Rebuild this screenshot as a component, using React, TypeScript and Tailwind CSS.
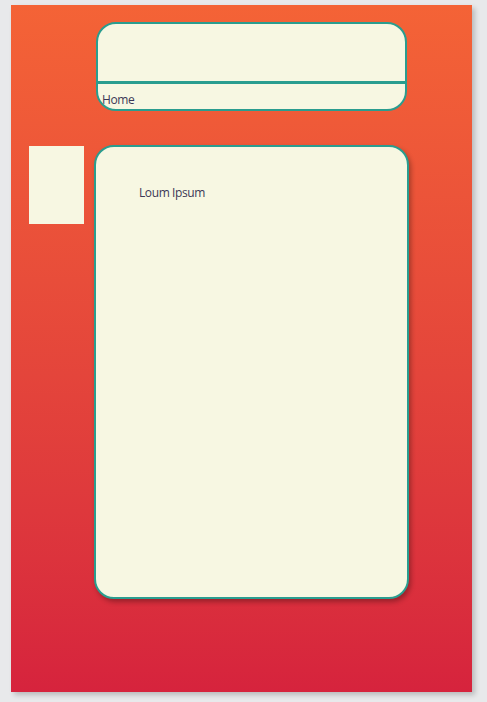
export default function App() {
  return (
    <div className="min-h-[702px] w-full bg-[#e8e9eb] pt-[5px] pl-[11px]" style={{ fontFamily: '"Open Sans", "Noto Sans", sans-serif' }}>
      <div className="w-[461px] h-[687px] bg-gradient-to-b from-[#f46336] to-[#d6233d] shadow-[3px_3px_5px_rgba(0,0,0,0.2)] flex flex-col pt-[17px]">
        {/* Header */}
        <div className="ml-[85px] w-[311px] h-[89px] bg-[#f7f7e2] border-2 border-[#2a9d8f] rounded-[20px] flex flex-col overflow-hidden">
          <div className="h-[60px] border-b-[3px] border-[#2a9d8f]" />
          <div className="pl-[4px] pt-[8px] text-[12px] tracking-[-0.4px] leading-[16px] text-[#3b3756]">Home</div>
        </div>

        {/* Body */}
        <div className="flex mt-[34px]">
          <div className="ml-[18px] mt-px w-[55px] h-[78px] bg-[#f7f7e2]" />
          <div className="ml-[10px] w-[315px] h-[454px] bg-[#f7f7e2] border-2 border-[#2a9d8f] rounded-[20px] shadow-[2px_3px_5px_rgba(0,0,0,0.3)] pl-[43px] pt-[38px]">
            <p className="text-[12px] tracking-[-0.4px] leading-[16px] text-[#3b3756]">Loum Ipsum</p>
          </div>
        </div>
      </div>
    </div>
  );
}
